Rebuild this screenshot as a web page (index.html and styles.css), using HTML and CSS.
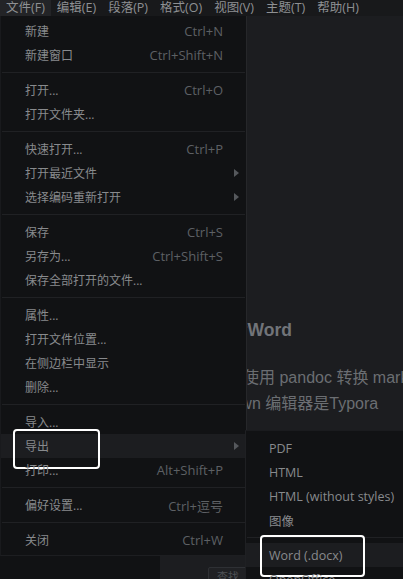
FILE: index.html
```html
<!DOCTYPE html>
<html lang="zh">
<head>
<meta charset="utf-8">
<title>Typora</title>
<link rel="stylesheet" href="styles.css">
</head>
<body>
<header class="menubar">
  <span class="mb-item active">文件(F)</span>
  <span class="mb-item">编辑(E)</span>
  <span class="mb-item">段落(P)</span>
  <span class="mb-item">格式(O)</span>
  <span class="mb-item">视图(V)</span>
  <span class="mb-item">主题(T)</span>
  <span class="mb-item">帮助(H)</span>
</header>
<div class="workspace">
  <aside class="sidebar"></aside>
  <main class="editor">
    <div class="doc">
      <h2 class="doc-title">如何转Word</h2>
      <p class="doc-line">我经常使用 pandoc 转换 markdown 文件为 Word 文档</p>
      <p class="doc-line cont">Markdown 编辑器是Typora</p>
    </div>
    <div class="statusbar"><span class="sb-btn">查找</span></div>
  </main>

  <nav class="menu main-menu">
    <div class="item"><span class="label">新建</span><span class="key">Ctrl+N</span></div>
    <div class="item"><span class="label">新建窗口</span><span class="key">Ctrl+Shift+N</span></div>
    <div class="sep"></div>
    <div class="item"><span class="label">打开...</span><span class="key">Ctrl+O</span></div>
    <div class="item"><span class="label">打开文件夹...</span></div>
    <div class="sep"></div>
    <div class="item"><span class="label">快速打开...</span><span class="key">Ctrl+P</span></div>
    <div class="item"><span class="label">打开最近文件</span><span class="arrow"></span></div>
    <div class="item"><span class="label">选择编码重新打开</span><span class="arrow"></span></div>
    <div class="sep"></div>
    <div class="item"><span class="label">保存</span><span class="key">Ctrl+S</span></div>
    <div class="item"><span class="label">另存为...</span><span class="key">Ctrl+Shift+S</span></div>
    <div class="item"><span class="label">保存全部打开的文件...</span></div>
    <div class="sep"></div>
    <div class="item"><span class="label">属性...</span></div>
    <div class="item"><span class="label">打开文件位置...</span></div>
    <div class="item"><span class="label">在侧边栏中显示</span></div>
    <div class="item"><span class="label">删除...</span></div>
    <div class="sep"></div>
    <div class="item"><span class="label">导入...</span></div>
    <div class="item hover mark-export"><span class="label">导出</span><span class="arrow"></span></div>
    <div class="item"><span class="label">打印...</span><span class="key">Alt+Shift+P</span></div>
    <div class="sep"></div>
    <div class="item"><span class="label">偏好设置...</span><span class="key">Ctrl+逗号</span></div>
    <div class="sep"></div>
    <div class="item"><span class="label">关闭</span><span class="key">Ctrl+W</span></div>
  </nav>

  <nav class="menu sub-menu">
    <div class="item"><span class="label">PDF</span></div>
    <div class="item"><span class="label">HTML</span></div>
    <div class="item"><span class="label">HTML (without styles)</span></div>
    <div class="item"><span class="label">图像</span></div>
    <div class="sep"></div>
    <div class="item hover mark-word"><span class="label">Word (.docx)</span></div>
    <div class="item"><span class="label">OpenOffice</span></div>
  </nav>
</div>
</body>
</html>
```
FILE: styles.css
```css
* { box-sizing: border-box; }

html, body {
  margin: 0;
  padding: 0;
  height: 100%;
}

body {
  background: #1c1d20;
  color: #8a8c8f;
  font-family: "Open Sans", "Noto Sans CJK SC", sans-serif;
  font-size: 12px;
  overflow: hidden;
}

/* ---------- menu bar ---------- */
.menubar {
  display: flex;
  height: 16px;
  background: #18191b;
}

.mb-item {
  padding: 0 6px;
  font-size: 12.5px;
  line-height: 16px;
  color: #8e9093;
  white-space: nowrap;
}

.mb-item.active {
  background: #232427;
}

/* ---------- workspace ---------- */
.workspace {
  position: relative;
  display: flex;
  height: calc(100vh - 16px);
}

.sidebar {
  width: 160px;
  flex: none;
  background: #111214;
}

.editor {
  flex: 1;
  display: flex;
  flex-direction: column;
  overflow: hidden;
  background: #1c1d20;
}

.doc {
  flex: 1;
  padding: 302px 0 0 35px;
  font-family: "Liberation Sans", "Noto Sans CJK SC", sans-serif;
  color: #6b6e72;
}

.doc-title {
  margin: 0 0 23px;
  font-size: 17.5px;
  line-height: 24px;
  font-weight: bold;
  color: #717479;
  white-space: nowrap;
}

.doc-line {
  margin: 0;
  font-size: 16px;
  line-height: 26px;
  white-space: nowrap;
}

.doc-line.cont {
  text-indent: -8px;
}

.statusbar {
  height: 16px;
  flex: none;
  padding: 4px 0 0 48px;
  overflow: hidden;
}

.sb-btn {
  display: inline-block;
  height: 22px;
  padding: 0 8px;
  border: 1px solid #2e3034;
  border-radius: 2px;
  background: #202124;
  color: #4d5054;
  font-size: 11px;
  line-height: 18px;
}

/* ---------- menus ---------- */
.menu {
  position: absolute;
  background: #111214;
}

.main-menu {
  left: 0;
  top: 0;
  width: 247px;
  padding: 3px 0;
  border-left: 1px solid #191a1d;
  border-right: 1px solid #26272a;
  border-bottom: 1px solid #1d1e21;
}

.sub-menu {
  left: 245px;
  top: 414px;
  width: 200px;
  padding-top: 5px;
  border-left: 1px solid #1f2023;
  border-top: 1px solid #1a1b1e;
}

.item {
  position: relative;
  display: grid;
  grid-template-columns: 1fr auto 23px;
  align-items: center;
  height: 24px;
  padding-left: 24px;
  color: #888a8d;
  white-space: nowrap;
}

.item.hover {
  background: #1c1d20;
}

.label {
  grid-column: 1;
}

.key {
  grid-column: 2;
  font-size: 13px;
  color: #5d6064;
}

.arrow {
  grid-column: 3;
  justify-self: start;
  margin-left: 11px;
  width: 0;
  height: 0;
  border-left: 5px solid #55585c;
  border-top: 4.5px solid transparent;
  border-bottom: 4.5px solid transparent;
}

.sub-menu .item {
  padding-left: 23px;
  font-size: 12.5px;
}

.sep {
  height: 1px;
  margin: 5px 1px;
  background: #202124;
}

/* ---------- annotation boxes ---------- */
.mark-export::after,
.mark-word::after {
  content: "";
  position: absolute;
  border: 2px solid #ffffff;
  border-radius: 4px;
}

.mark-export::after {
  left: 12px;
  top: -5px;
  width: 83px;
  height: 36px;
}

.mark-word::after {
  left: 14px;
  top: -8px;
  width: 101px;
  height: 38px;
}
```
